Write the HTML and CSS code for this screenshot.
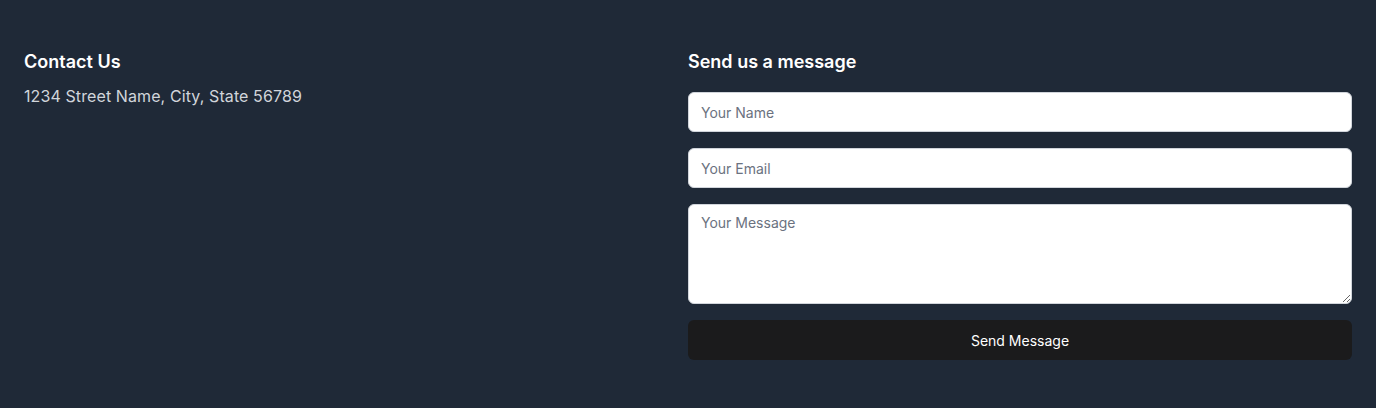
FILE: index.html
```html
<!DOCTYPE html>
<html lang="en">
<head>
<meta charset="utf-8">
<link rel="stylesheet" href="styles.css">
</head>
<body>
<section class="contact">
  <div class="col">
    <h2 class="title">Contact Us</h2>
    <p class="address">1234 Street Name, City, State 56789</p>
  </div>
  <div class="col">
    <h2 class="title title-form">Send us a message</h2>
    <form class="form">
      <input class="field" type="text" placeholder="Your Name">
      <input class="field" type="email" placeholder="Your Email">
      <textarea class="field area" placeholder="Your Message"></textarea>
      <button class="btn" type="button">Send Message</button>
    </form>
  </div>
</section>
</body>
</html>
```
FILE: styles.css
```css
* { box-sizing: border-box; }
html, body { margin: 0; padding: 0; }
body {
  background: #1f2937;
  font-family: Inter, "Noto Sans", sans-serif;
  color: #fff;
  height: 408px;
}
.contact {
  display: grid;
  grid-template-columns: 1fr 1fr;
  padding: 48px 24px;
}
.title {
  margin: 0 0 8px;
  font-size: 18px;
  line-height: 28px;
  font-weight: 600;
}
.title-form { margin-bottom: 16px; }
.address {
  margin: 0;
  font-size: 16px;
  line-height: 24px;
  color: #d1d5db;
  letter-spacing: 0.1px;
}
.form {
  display: flex;
  flex-direction: column;
  gap: 16px;
}
.field {
  display: block;
  width: 100%;
  height: 40px;
  border: 1px solid #d1d5db;
  border-radius: 6px;
  background: #fff;
  padding: 8px 12px;
  font-family: Inter, "Noto Sans", sans-serif;
  font-size: 14px;
  line-height: 20px;
  color: #111827;
}
.field::placeholder { color: #6b7280; }
.area {
  height: 100px;
  resize: vertical;
}
.btn {
  height: 40px;
  border: 0;
  border-radius: 6px;
  background: #1b1b1c;
  color: #fff;
  font-family: Inter, "Noto Sans", sans-serif;
  font-size: 14px;
  font-weight: 400;
}
```
